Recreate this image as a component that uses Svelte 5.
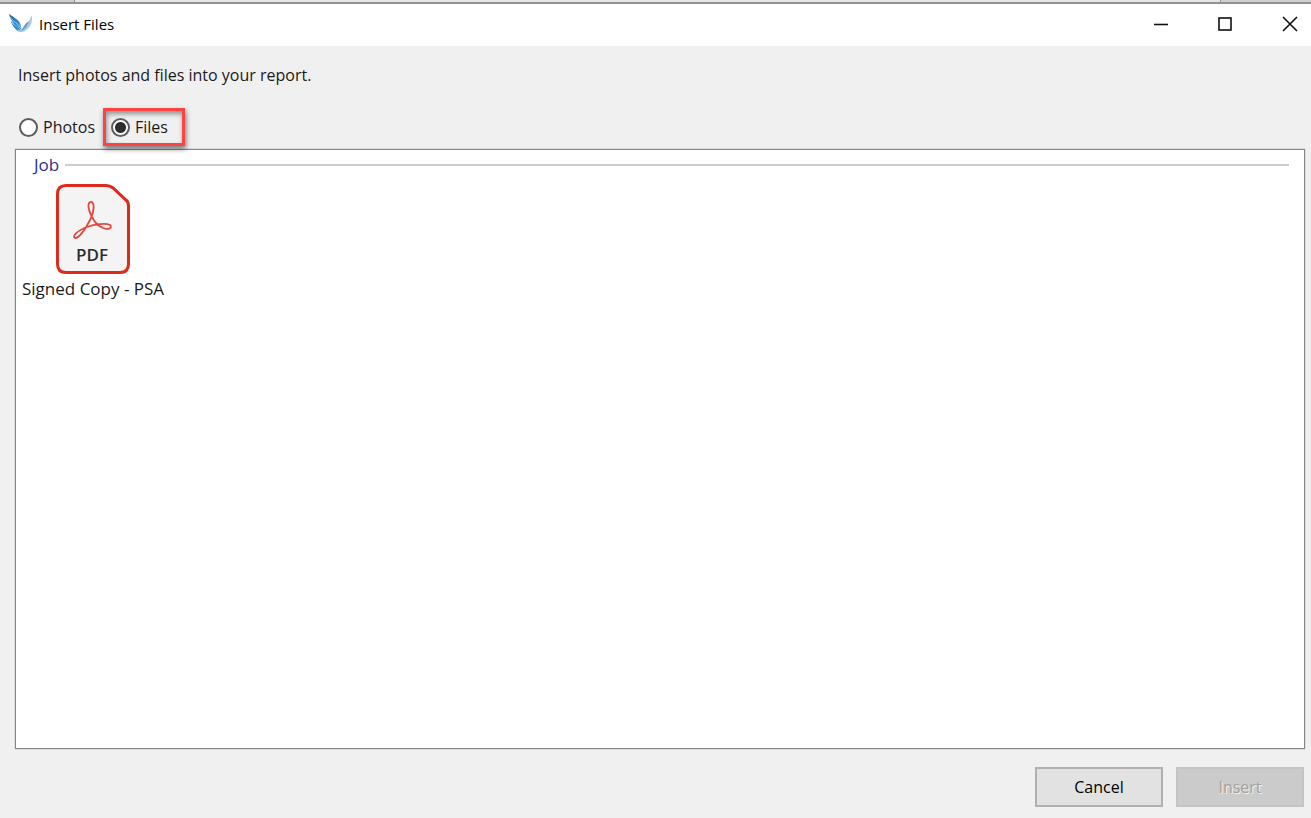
<script lang="ts">
  type Source = "photos" | "files";

  const sources: { id: Source; label: string }[] = [
    { id: "photos", label: "Photos" },
    { id: "files", label: "Files" },
  ];

  const groups = [{ title: "Job", files: ["Signed Copy - PSA"] }];

  let source: Source = $state("files");
  let selected: string | null = $state(null);
</script>

<div class="backdrop">
  <span class="tab"></span>
  <span class="tab right"></span>
</div>

<main class="window">
  <header class="titlebar">
    <svg class="logo" viewBox="0 0 24 22" aria-hidden="true">
      <defs>
        <linearGradient id="wing" x1="0" y1="0" x2="1" y2="1">
          <stop offset="0" stop-color="#1a63a8" />
          <stop offset="1" stop-color="#4fa9e0" />
        </linearGradient>
      </defs>
      <path d="M0 1C4 4 9 6 11 10C12 12 12 15 13 18C9 14 2 10 0 1Z" fill="url(#wing)" />
      <path d="M2 8C5 12 10 13 13 18C8 17 3 14 2 8Z" fill="#1f7cc2" />
      <path d="M5 14C8 16 11 16 14 18C11 20 7 18 5 14Z" fill="#3a9bdc" />
      <path d="M1 4C4 9 9 10 12 15M3 10C6 13 9 14 12 17" fill="none" stroke="#d4ecfa" stroke-width=".6" />
      <path d="M23 2C24 10 20 18 13 19C11 19 9 18 8 17C16 18 19 10 23 2Z" fill="#a9cbe6" />
      <path d="M20 8C19 11 17 16 12 18C14 15 16 10 20 8Z" fill="#5f9bce" />
    </svg>
    <h1>Insert Files</h1>
    <div class="controls">
      <button type="button" aria-label="Minimize">
        <svg viewBox="0 0 16 16"><path d="M1 8.5H15" /></svg>
      </button>
      <button type="button" aria-label="Maximize">
        <svg viewBox="0 0 16 16"><rect x="2" y="2" width="12" height="12" /></svg>
      </button>
      <button type="button" aria-label="Close">
        <svg viewBox="0 0 16 16"><path d="M1 1L15 15M15 1L1 15" /></svg>
      </button>
    </div>
  </header>

  <section class="content">
    <p class="intro">Insert photos and files into your report.</p>

    <div class="sources" role="radiogroup" aria-label="Source">
      {#each sources as item}
        <label class:active={source === item.id}>
          <input type="radio" name="source" value={item.id} bind:group={source} />
          <span>{item.label}</span>
        </label>
      {/each}
    </div>

    <div class="list">
      {#each groups as group}
        <h2>{group.title}</h2>
        <div class="items">
          {#each group.files as file}
            <button
              type="button"
              class="file"
              aria-pressed={selected === file}
              onclick={() => (selected = file)}
            >
              <svg viewBox="0 0 74 90" aria-hidden="true">
                <path
                  d="M10 1.5H50Q54 1.5 57 4L70 16Q72.5 18 72.5 22V80Q72.5 88.5 64 88.5H10Q1.5 88.5 1.5 80V10Q1.5 1.5 10 1.5Z"
                  fill="#f4f4f5"
                  stroke="#dc2a1c"
                  stroke-width="3"
                />
                <!-- looped strokes of the acrobat mark -->
                <g fill="none" stroke="#e2483d" stroke-width="1.8" stroke-linejoin="round">
                  <path d="M36 33C32 26 31 18 35 18C39 18 38 27 35 34C31 42 24 54 19 54C16 53 20 47 31 43" />
                  <path d="M31 43C39 40 50 39 54 41C57 44 52 46 47 44C42 42 38 37 36 33" />
                </g>
                <text x="36" y="77" text-anchor="middle">PDF</text>
              </svg>
              <span>{file}</span>
            </button>
          {/each}
        </div>
      {/each}
    </div>

    <footer>
      <button type="button" class="action">Cancel</button>
      <button type="button" class="action" disabled={selected === null}>Insert</button>
    </footer>
  </section>
</main>

<style>
  :global(body) {
    margin: 0;
  }

  :global(#app) {
    display: flex;
    flex-direction: column;
    min-height: 100vh;
    font-family: "Open Sans", "Noto Sans", sans-serif;
    font-size: 16px;
    line-height: 22px;
    color: #1b1b1b;
  }

  button {
    font: inherit;
    color: inherit;
    border: 0;
    padding: 0;
    background: none;
  }

  /* sliver of the window behind the dialog */
  .backdrop {
    display: flex;
    justify-content: space-between;
    height: 2px;
    background: #e6e6e6;
    border-bottom: 2px solid #929292;
  }

  .tab {
    width: 74px;
    background: #cfcfcf;
    border-right: 1px solid #909090;
  }

  .tab.right {
    width: 90px;
    border-right: 0;
    border-left: 1px solid #909090;
  }

  .window {
    flex: 1;
    display: flex;
    flex-direction: column;
    background: #f0f0f0;
  }

  .titlebar {
    display: flex;
    align-items: center;
    height: 40px;
    padding: 0 0 2px 9px;
    background: #fff;
  }

  .logo {
    width: 24px;
    height: 22px;
  }

  h1 {
    margin: 0 auto 0 6px;
    font-size: 15px;
    font-weight: 400;
    color: #000;
  }

  .controls {
    display: flex;
    align-self: stretch;
  }

  .controls button {
    display: flex;
    align-items: center;
    justify-content: center;
    width: 64px;
  }

  .controls button:last-child {
    justify-content: flex-end;
    width: 54px;
    padding-right: 13px;
  }

  .controls svg {
    width: 16px;
    height: 16px;
    fill: none;
    stroke: #111;
    stroke-width: 1.6;
  }

  .content {
    flex: 1;
    display: flex;
    flex-direction: column;
    padding: 18px 6px 11px 15px;
  }

  .intro {
    margin: 0 0 22px 3px;
  }

  .sources {
    display: flex;
    margin-bottom: 3px;
  }

  .sources label {
    display: flex;
    align-items: center;
    gap: 5px;
    height: 32px;
    padding: 0 5px 0 1px;
    border: 3px solid transparent;
  }

  .sources .active {
    position: relative;
    padding: 0 14px 0 5px;
    border-color: #fb4344;
    box-shadow: 1px 3px 5px rgba(0, 0, 0, 0.5), inset 1px 3px 5px rgba(0, 0, 0, 0.4);
  }

  .sources input {
    appearance: none;
    width: 19px;
    height: 19px;
    margin: 0;
    border: 2px solid #5c5c5c;
    border-radius: 50%;
    background: #fff;
  }

  .sources input:checked {
    background: radial-gradient(circle, #2e2e2e 5px, #fff 6px);
  }

  .list {
    flex: 1;
    padding: 4px 15px 4px 6px;
    background: #fff;
    border: 1px solid #858585;
    box-shadow: 0 0 1px #858585;
  }

  h2 {
    display: flex;
    align-items: center;
    gap: 6px;
    margin: 0 0 8px 12px;
    font-size: 17px;
    font-weight: 400;
    color: #27338f;
  }

  h2::after {
    content: "";
    flex: 1;
    height: 2px;
    background: #cbcbd6;
  }

  .items {
    display: flex;
    flex-wrap: wrap;
    gap: 12px;
  }

  .file {
    display: flex;
    flex-direction: column;
    align-items: center;
    gap: 4px;
    min-width: 140px;
    font-size: 17px;
  }

  .file svg {
    width: 74px;
    height: 90px;
  }

  .file text {
    font-size: 17px;
    font-weight: 600;
    fill: #2d2d30;
  }

  footer {
    display: flex;
    justify-content: flex-end;
    gap: 13px;
    padding: 18px 1px 0 0;
  }

  .action {
    width: 128px;
    height: 40px;
    background: #e2e2e2;
    border: 2px solid #b0b0b0;
    color: #000;
  }

  .action:disabled {
    background: #cbcbcb;
    border-color: #c4c4c4;
    color: #a2a2a2;
    text-shadow: 1px 1px 0 #f2f2f2;
  }
</style>
